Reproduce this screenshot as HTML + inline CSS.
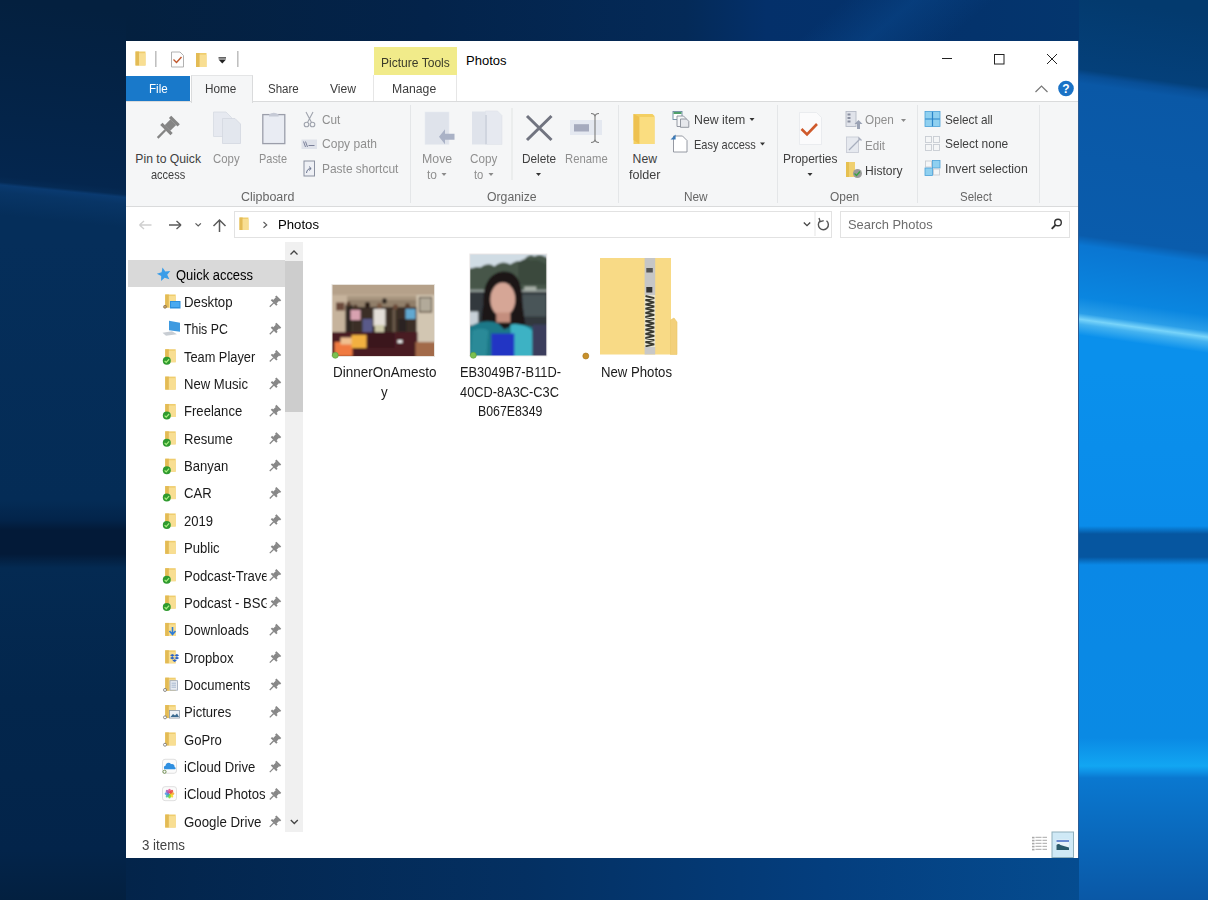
<!DOCTYPE html>
<html><head><meta charset="utf-8">
<style>
html,body{margin:0;padding:0;width:1208px;height:900px;overflow:hidden;}
body{position:relative;font-family:"Liberation Sans", sans-serif;background:#0a2f5c;}
.t{position:absolute;white-space:nowrap;}
.b{position:absolute;}
svg{position:absolute;overflow:visible;}
</style></head><body>

<div class="b" style="left:1079px;top:0;width:129px;height:370px;background:linear-gradient(187.97deg,#033a6e 15.0px,#04407a 86.3px,#084e96 92.2px,#0a58a6 100.1px,#0a5cac 250.7px,#0a76d2 260.6px,#0a86e0 312.1px,#2a9ee8 327.9px,#78d4fa 333.9px,#44b2f0 338.8px,#0a90ec 349.7px,#0a90ec 381.4px);"></div>
<div class="b" style="left:1079px;top:370px;width:129px;height:530px;background:linear-gradient(180deg,#0a90ec 0px,#0a8cea 156px,#0656a0 164px,#0656a0 187px,#0a88e6 195px,#0a8ae4 368px,#12a6f2 396px,#0e90e4 402px,#0a78d0 408px,#0a58a6 530px);"></div>
<div class="b" style="left:0;top:0;width:126px;height:240px;background:linear-gradient(185.71deg,#04203f 12.5px,#04264e 187.7px,#052a54 193.6px,#0a3a70 196.6px,#083566 203.6px,#052e5a 226.5px,#052e5a 271.2px);"></div>
<div class="b" style="left:0;top:240px;width:126px;height:660px;background:linear-gradient(180deg,#052e5a 0px,#042c56 260px,#03244a 280px,#031a38 290px,#031a38 314px,#042a52 328px,#03264c 460px,#03244a 610px,#032040 660px);"></div>
<div class="b" style="left:126px;top:0;width:953px;height:41px;background:linear-gradient(90deg,#04203f 0px,#03234a 300px,#042a58 560px,#04306a 640px,#04336c 850px,#04366e 953px);"></div>
<div class="b" style="left:126px;top:0;width:953px;height:41px;background:linear-gradient(140.00deg,rgba(10,74,144,0) 462.1px,rgba(10,74,144,0.45) 507.1px,rgba(10,74,144,0) 558.5px);"></div>
<div class="b" style="left:126px;top:858px;width:953px;height:42px;background:linear-gradient(90deg,#03244a 0px,#043062 400px,#043e7e 700px,#054c90 953px);"></div>
<div class="b" style="left:126px;top:41px;width:953px;height:817px;background:#fff;"></div>
<div class="t" style="left:466.00px;top:52.75px;font-size:13px;line-height:15px;color:#000;">Photos</div>
<div class="b" style="left:374px;top:47px;width:83px;height:28px;background:#f1eb8a;"></div>
<div class="t" style="left:380.80px;top:55.99px;font-size:12px;line-height:14px;color:#3b3b2a;transform:scaleX(1.0050);transform-origin:0 0;">Picture Tools</div>
<svg style="left:0;top:0" width="1208" height="900"><g stroke="#222" stroke-width="1" fill="none"><line x1="942" y1="58.5" x2="952" y2="58.5"/><rect x="994.5" y="54.5" width="9.5" height="9.5"/><line x1="1047" y1="54" x2="1057" y2="64"/><line x1="1057" y1="54" x2="1047" y2="64"/></g></svg>
<div class="b" style="left:126px;top:76px;width:64px;height:25px;background:#1979ca;"></div>
<div class="t" style="left:148.50px;top:82.19px;font-size:12px;line-height:14px;color:#fff;transform:scaleX(0.9679);transform-origin:0 0;">File</div>
<div class="t" style="left:267.90px;top:82.09px;font-size:12px;line-height:14px;color:#3c3c3c;transform:scaleX(0.9613);transform-origin:0 0;">Share</div>
<div class="t" style="left:330.00px;top:82.09px;font-size:12px;line-height:14px;color:#3c3c3c;transform:scaleX(1.0078);transform-origin:0 0;">View</div>
<div class="b" style="left:373px;top:75px;width:84px;height:26px;border-left:1px solid #e6e6e6;border-right:1px solid #e6e6e6;box-sizing:border-box;"></div>
<div class="t" style="left:392.40px;top:82.09px;font-size:12px;line-height:14px;color:#3c3c3c;transform:scaleX(1.0189);transform-origin:0 0;">Manage</div>
<div class="b" style="left:126px;top:101px;width:953px;height:106px;background:#f5f6f7;border-top:1px solid #dadbdc;border-bottom:1px solid #dadbdc;box-sizing:border-box;"></div>
<div class="b" style="left:190.5px;top:75px;width:62px;height:27.5px;background:#f5f6f7;border-left:1px solid #dadbdc;border-right:1px solid #dadbdc;border-top:1px solid #e4e5e6;box-sizing:border-box;"></div>
<div class="t" style="left:205.30px;top:82.19px;font-size:12px;line-height:14px;color:#3c3c3c;transform:scaleX(0.9800);transform-origin:0 0;">Home</div>
<div class="b" style="left:410px;top:105px;width:1px;height:98px;background:#e4e6e8;"></div>
<div class="b" style="left:618px;top:105px;width:1px;height:98px;background:#e4e6e8;"></div>
<div class="b" style="left:777px;top:105px;width:1px;height:98px;background:#e4e6e8;"></div>
<div class="b" style="left:917px;top:105px;width:1px;height:98px;background:#e4e6e8;"></div>
<div class="b" style="left:1039px;top:105px;width:1px;height:98px;background:#e4e6e8;"></div>
<div class="t" style="left:240.90px;top:189.59px;font-size:12px;line-height:14px;color:#666;transform:scaleX(1.0378);transform-origin:0 0;">Clipboard</div>
<div class="t" style="left:487.30px;top:189.59px;font-size:12px;line-height:14px;color:#666;transform:scaleX(1.0201);transform-origin:0 0;">Organize</div>
<div class="t" style="left:683.50px;top:189.59px;font-size:12px;line-height:14px;color:#666;transform:scaleX(0.9850);transform-origin:0 0;">New</div>
<div class="t" style="left:830.30px;top:189.59px;font-size:12px;line-height:14px;color:#666;transform:scaleX(0.9918);transform-origin:0 0;">Open</div>
<div class="t" style="left:960.40px;top:189.59px;font-size:12px;line-height:14px;color:#666;transform:scaleX(0.9562);transform-origin:0 0;">Select</div>
<div class="t" style="left:135.30px;top:152.22px;font-size:12.2px;line-height:14px;color:#404040;">Pin to Quick</div>
<div class="t" style="left:150.80px;top:168.12px;font-size:12.2px;line-height:14px;color:#404040;transform:scaleX(0.9014);transform-origin:0 0;">access</div>
<div class="t" style="left:213.00px;top:152.22px;font-size:12.2px;line-height:14px;color:#8f8f8f;transform:scaleX(0.9338);transform-origin:0 0;">Copy</div>
<div class="t" style="left:259.00px;top:152.22px;font-size:12.2px;line-height:14px;color:#8f8f8f;transform:scaleX(0.8983);transform-origin:0 0;">Paste</div>
<div class="t" style="left:322.20px;top:112.72px;font-size:12.2px;line-height:14px;color:#8f8f8f;transform:scaleX(0.9646);transform-origin:0 0;">Cut</div>
<div class="t" style="left:322.20px;top:137.22px;font-size:12.2px;line-height:14px;color:#8f8f8f;transform:scaleX(0.9886);transform-origin:0 0;">Copy path</div>
<div class="t" style="left:322.20px;top:162.22px;font-size:12.2px;line-height:14px;color:#8f8f8f;transform:scaleX(0.9800);transform-origin:0 0;">Paste shortcut</div>
<div class="t" style="left:421.80px;top:152.32px;font-size:12.2px;line-height:14px;color:#8f8f8f;transform:scaleX(1.0124);transform-origin:0 0;">Move</div>
<div class="t" style="left:426.90px;top:167.82px;font-size:12.2px;line-height:14px;color:#8f8f8f;transform:scaleX(0.9816);transform-origin:0 0;">to</div>
<div class="t" style="left:469.70px;top:152.32px;font-size:12.2px;line-height:14px;color:#8f8f8f;transform:scaleX(0.9583);transform-origin:0 0;">Copy</div>
<div class="t" style="left:473.90px;top:167.82px;font-size:12.2px;line-height:14px;color:#8f8f8f;transform:scaleX(0.9227);transform-origin:0 0;">to</div>
<div class="t" style="left:521.60px;top:152.32px;font-size:12.2px;line-height:14px;color:#404040;transform:scaleX(0.9700);transform-origin:0 0;">Delete</div>
<div class="t" style="left:565.00px;top:152.32px;font-size:12.2px;line-height:14px;color:#8f8f8f;transform:scaleX(0.9259);transform-origin:0 0;">Rename</div>
<div class="t" style="left:632.60px;top:152.12px;font-size:12.2px;line-height:14px;color:#404040;">New</div>
<div class="t" style="left:628.80px;top:168.32px;font-size:12.2px;line-height:14px;color:#404040;transform:scaleX(1.0328);transform-origin:0 0;">folder</div>
<div class="t" style="left:693.80px;top:112.72px;font-size:12.2px;line-height:14px;color:#404040;transform:scaleX(1.0103);transform-origin:0 0;">New item</div>
<div class="t" style="left:693.80px;top:138.12px;font-size:12.2px;line-height:14px;color:#404040;transform:scaleX(0.9036);transform-origin:0 0;">Easy access</div>
<div class="t" style="left:782.50px;top:151.52px;font-size:12.2px;line-height:14px;color:#404040;transform:scaleX(0.9797);transform-origin:0 0;">Properties</div>
<div class="t" style="left:865.40px;top:113.12px;font-size:12.2px;line-height:14px;color:#8f8f8f;transform:scaleX(0.9655);transform-origin:0 0;">Open</div>
<div class="t" style="left:865.40px;top:138.52px;font-size:12.2px;line-height:14px;color:#8f8f8f;transform:scaleX(0.9551);transform-origin:0 0;">Edit</div>
<div class="t" style="left:865.40px;top:163.52px;font-size:12.2px;line-height:14px;color:#404040;transform:scaleX(0.9910);transform-origin:0 0;">History</div>
<div class="t" style="left:945.20px;top:112.72px;font-size:12.2px;line-height:14px;color:#404040;transform:scaleX(0.9650);transform-origin:0 0;">Select all</div>
<div class="t" style="left:945.20px;top:137.32px;font-size:12.2px;line-height:14px;color:#404040;transform:scaleX(0.9827);transform-origin:0 0;">Select none</div>
<div class="t" style="left:945.20px;top:162.02px;font-size:12.2px;line-height:14px;color:#404040;transform:scaleX(1.0092);transform-origin:0 0;">Invert selection</div>
<div class="b" style="left:234px;top:210.5px;width:598px;height:27px;border:1px solid #e2e2e2;box-sizing:border-box;background:#fff;"></div>
<div class="t" style="left:277.50px;top:217.37px;font-size:13.5px;line-height:16px;color:#000;transform:scaleX(0.9750);transform-origin:0 0;">Photos</div>
<div class="b" style="left:839.5px;top:210.5px;width:230.5px;height:27px;border:1px solid #e2e2e2;box-sizing:border-box;background:#fff;"></div>
<div class="t" style="left:848.00px;top:217.47px;font-size:13.5px;line-height:16px;color:#6d6d6d;transform:scaleX(0.9564);transform-origin:0 0;">Search Photos</div>
<div class="b" style="left:128px;top:260px;width:157px;height:27px;background:#d9d9d9;"></div>
<div class="t" style="left:175.50px;top:266.50px;font-size:14px;line-height:16px;color:#000;transform:scaleX(0.9251);transform-origin:0 0;">Quick access</div>
<div class="b" style="left:0;top:0;width:1208px;height:900px;clip-path:inset(288px 941.5px 60px 180px);">
<div class="t" style="left:184.40px;top:293.80px;font-size:14px;line-height:16px;color:#1a1a1a;transform:scaleX(0.9459);transform-origin:0 0;">Desktop</div>
<div class="t" style="left:184.40px;top:321.17px;font-size:14px;line-height:16px;color:#1a1a1a;transform:scaleX(0.8800);transform-origin:0 0;">This PC</div>
<div class="t" style="left:184.40px;top:348.54px;font-size:14px;line-height:16px;color:#1a1a1a;transform:scaleX(0.9147);transform-origin:0 0;">Team Player</div>
<div class="t" style="left:184.40px;top:375.91px;font-size:14px;line-height:16px;color:#1a1a1a;transform:scaleX(0.9350);transform-origin:0 0;">New Music</div>
<div class="t" style="left:184.40px;top:403.28px;font-size:14px;line-height:16px;color:#1a1a1a;transform:scaleX(0.9350);transform-origin:0 0;">Freelance</div>
<div class="t" style="left:184.40px;top:430.65px;font-size:14px;line-height:16px;color:#1a1a1a;transform:scaleX(0.9350);transform-origin:0 0;">Resume</div>
<div class="t" style="left:184.40px;top:458.02px;font-size:14px;line-height:16px;color:#1a1a1a;transform:scaleX(0.9350);transform-origin:0 0;">Banyan</div>
<div class="t" style="left:184.40px;top:485.39px;font-size:14px;line-height:16px;color:#1a1a1a;transform:scaleX(0.9350);transform-origin:0 0;">CAR</div>
<div class="t" style="left:184.40px;top:512.76px;font-size:14px;line-height:16px;color:#1a1a1a;transform:scaleX(0.9350);transform-origin:0 0;">2019</div>
<div class="t" style="left:184.40px;top:540.13px;font-size:14px;line-height:16px;color:#1a1a1a;transform:scaleX(0.9350);transform-origin:0 0;">Public</div>
<div class="t" style="left:184.40px;top:567.50px;font-size:14px;line-height:16px;color:#1a1a1a;transform:scaleX(0.9350);transform-origin:0 0;">Podcast-Trave</div>
<div class="t" style="left:184.40px;top:594.87px;font-size:14px;line-height:16px;color:#1a1a1a;transform:scaleX(0.9350);transform-origin:0 0;">Podcast - BSG</div>
<div class="t" style="left:184.40px;top:622.24px;font-size:14px;line-height:16px;color:#1a1a1a;transform:scaleX(0.9350);transform-origin:0 0;">Downloads</div>
<div class="t" style="left:184.40px;top:649.61px;font-size:14px;line-height:16px;color:#1a1a1a;transform:scaleX(0.9350);transform-origin:0 0;">Dropbox</div>
<div class="t" style="left:184.40px;top:676.98px;font-size:14px;line-height:16px;color:#1a1a1a;transform:scaleX(0.9350);transform-origin:0 0;">Documents</div>
<div class="t" style="left:184.40px;top:704.35px;font-size:14px;line-height:16px;color:#1a1a1a;transform:scaleX(0.9350);transform-origin:0 0;">Pictures</div>
<div class="t" style="left:184.40px;top:731.72px;font-size:14px;line-height:16px;color:#1a1a1a;transform:scaleX(0.9350);transform-origin:0 0;">GoPro</div>
<div class="t" style="left:184.40px;top:759.09px;font-size:14px;line-height:16px;color:#1a1a1a;transform:scaleX(0.9350);transform-origin:0 0;">iCloud Drive</div>
<div class="t" style="left:184.40px;top:786.46px;font-size:14px;line-height:16px;color:#1a1a1a;transform:scaleX(0.9350);transform-origin:0 0;">iCloud Photos</div>
<div class="t" style="left:184.40px;top:813.83px;font-size:14px;line-height:16px;color:#1a1a1a;transform:scaleX(0.9475);transform-origin:0 0;">Google Drive</div>
</div>
<div class="b" style="left:285px;top:242px;width:18px;height:590px;background:#f0f0f0;"></div>
<div class="b" style="left:285px;top:261px;width:18px;height:151px;background:#cdcdcd;"></div>
<div class="t" style="left:333.00px;top:363.80px;font-size:14px;line-height:16px;color:#1a1a1a;transform:scaleX(0.9629);transform-origin:0 0;">DinnerOnAmesto</div>
<div class="t" style="left:380.50px;top:383.80px;font-size:14px;line-height:16px;color:#1a1a1a;transform:scaleX(0.9500);transform-origin:0 0;">y</div>
<div class="t" style="left:460.00px;top:363.80px;font-size:14px;line-height:16px;color:#1a1a1a;transform:scaleX(0.9161);transform-origin:0 0;">EB3049B7-B11D-</div>
<div class="t" style="left:460.00px;top:383.50px;font-size:14px;line-height:16px;color:#1a1a1a;transform:scaleX(0.9154);transform-origin:0 0;">40CD-8A3C-C3C</div>
<div class="t" style="left:478.00px;top:403.20px;font-size:14px;line-height:16px;color:#1a1a1a;transform:scaleX(0.8800);transform-origin:0 0;">B067E8349</div>
<div class="t" style="left:600.80px;top:363.70px;font-size:14px;line-height:16px;color:#1a1a1a;transform:scaleX(0.9409);transform-origin:0 0;">New Photos</div>
<div class="t" style="left:142.00px;top:836.90px;font-size:14px;line-height:16px;color:#444;transform:scaleX(0.9524);transform-origin:0 0;">3 items</div>
<svg style="left:0;top:0" width="1208" height="900"><polygon points="164.00,267.30 165.90,271.88 170.85,272.28 167.08,275.50 168.23,280.32 164.00,277.74 159.77,280.32 160.92,275.50 157.15,272.28 162.10,271.88" fill="#3a9de8" transform="rotate(-12 164 274.5)"/><g transform="translate(275.0,301.6) rotate(45) scale(1.0)" fill="#878787"><rect x="-3.4" y="-5.4" width="6.8" height="1.9"/><rect x="-2.4" y="-3.8" width="4.8" height="4.4"/><rect x="-3.9" y="0.2" width="7.8" height="1.9"/><rect x="-0.65" y="1.8" width="1.3" height="5.6"/></g><rect x="165.2" y="294.5" width="10.5" height="13" fill="#efcd6e"/><rect x="165.2" y="294.5" width="3.67" height="13" fill="#e3bb55"/><rect x="168.88" y="296.06" width="6.83" height="11.44" fill="#f8de92"/><rect x="170" y="301.0" width="10.5" height="7.5" fill="#2d8fdc"/><rect x="171" y="302.0" width="8.5" height="5" fill="#4aaaf0"/><circle cx="165" cy="306.8" r="1.5" fill="#c8a060" stroke="#706050" stroke-width="0.6"/><g transform="translate(275.0,328.97) rotate(45) scale(1.0)" fill="#878787"><rect x="-3.4" y="-5.4" width="6.8" height="1.9"/><rect x="-2.4" y="-3.8" width="4.8" height="4.4"/><rect x="-3.9" y="0.2" width="7.8" height="1.9"/><rect x="-0.65" y="1.8" width="1.3" height="5.6"/></g><path d="M169,320.87 L180,322.87 L180,331.87 L169,330.37 Z" fill="#3e9ae0"/><path d="M162.5,332.87 L172,331.37 L177,334.37 L166,335.87 Z" fill="#c8cdd3"/><g transform="translate(275.0,356.34000000000003) rotate(45) scale(1.0)" fill="#878787"><rect x="-3.4" y="-5.4" width="6.8" height="1.9"/><rect x="-2.4" y="-3.8" width="4.8" height="4.4"/><rect x="-3.9" y="0.2" width="7.8" height="1.9"/><rect x="-0.65" y="1.8" width="1.3" height="5.6"/></g><rect x="165.2" y="349.24" width="10.5" height="13" fill="#efcd6e"/><rect x="165.2" y="349.24" width="3.67" height="13" fill="#e3bb55"/><rect x="168.88" y="350.80" width="6.83" height="11.44" fill="#f8de92"/><circle cx="166.8" cy="360.74" r="4" fill="#2f9a2f"/><path d="M164.60000000000002,360.84000000000003 L166.20000000000002,362.44 L169.10000000000002,359.24" stroke="#a8f080" stroke-width="1.2" fill="none"/><g transform="translate(275.0,383.71000000000004) rotate(45) scale(1.0)" fill="#878787"><rect x="-3.4" y="-5.4" width="6.8" height="1.9"/><rect x="-2.4" y="-3.8" width="4.8" height="4.4"/><rect x="-3.9" y="0.2" width="7.8" height="1.9"/><rect x="-0.65" y="1.8" width="1.3" height="5.6"/></g><rect x="165.2" y="376.61" width="10.5" height="13" fill="#efcd6e"/><rect x="165.2" y="376.61" width="3.67" height="13" fill="#e3bb55"/><rect x="168.88" y="378.17" width="6.83" height="11.44" fill="#f8de92"/><g transform="translate(275.0,411.08000000000004) rotate(45) scale(1.0)" fill="#878787"><rect x="-3.4" y="-5.4" width="6.8" height="1.9"/><rect x="-2.4" y="-3.8" width="4.8" height="4.4"/><rect x="-3.9" y="0.2" width="7.8" height="1.9"/><rect x="-0.65" y="1.8" width="1.3" height="5.6"/></g><rect x="165.2" y="403.98" width="10.5" height="13" fill="#efcd6e"/><rect x="165.2" y="403.98" width="3.67" height="13" fill="#e3bb55"/><rect x="168.88" y="405.54" width="6.83" height="11.44" fill="#f8de92"/><circle cx="166.8" cy="415.48" r="4" fill="#2f9a2f"/><path d="M164.60000000000002,415.58000000000004 L166.20000000000002,417.18 L169.10000000000002,413.98" stroke="#a8f080" stroke-width="1.2" fill="none"/><g transform="translate(275.0,438.45000000000005) rotate(45) scale(1.0)" fill="#878787"><rect x="-3.4" y="-5.4" width="6.8" height="1.9"/><rect x="-2.4" y="-3.8" width="4.8" height="4.4"/><rect x="-3.9" y="0.2" width="7.8" height="1.9"/><rect x="-0.65" y="1.8" width="1.3" height="5.6"/></g><rect x="165.2" y="431.35" width="10.5" height="13" fill="#efcd6e"/><rect x="165.2" y="431.35" width="3.67" height="13" fill="#e3bb55"/><rect x="168.88" y="432.91" width="6.83" height="11.44" fill="#f8de92"/><circle cx="166.8" cy="442.85" r="4" fill="#2f9a2f"/><path d="M164.60000000000002,442.95000000000005 L166.20000000000002,444.55 L169.10000000000002,441.35" stroke="#a8f080" stroke-width="1.2" fill="none"/><g transform="translate(275.0,465.82000000000005) rotate(45) scale(1.0)" fill="#878787"><rect x="-3.4" y="-5.4" width="6.8" height="1.9"/><rect x="-2.4" y="-3.8" width="4.8" height="4.4"/><rect x="-3.9" y="0.2" width="7.8" height="1.9"/><rect x="-0.65" y="1.8" width="1.3" height="5.6"/></g><rect x="165.2" y="458.72" width="10.5" height="13" fill="#efcd6e"/><rect x="165.2" y="458.72" width="3.67" height="13" fill="#e3bb55"/><rect x="168.88" y="460.28" width="6.83" height="11.44" fill="#f8de92"/><circle cx="166.8" cy="470.22" r="4" fill="#2f9a2f"/><path d="M164.60000000000002,470.32000000000005 L166.20000000000002,471.92 L169.10000000000002,468.72" stroke="#a8f080" stroke-width="1.2" fill="none"/><g transform="translate(275.0,493.19000000000005) rotate(45) scale(1.0)" fill="#878787"><rect x="-3.4" y="-5.4" width="6.8" height="1.9"/><rect x="-2.4" y="-3.8" width="4.8" height="4.4"/><rect x="-3.9" y="0.2" width="7.8" height="1.9"/><rect x="-0.65" y="1.8" width="1.3" height="5.6"/></g><rect x="165.2" y="486.09000000000003" width="10.5" height="13" fill="#efcd6e"/><rect x="165.2" y="486.09000000000003" width="3.67" height="13" fill="#e3bb55"/><rect x="168.88" y="487.65" width="6.83" height="11.44" fill="#f8de92"/><circle cx="166.8" cy="497.59000000000003" r="4" fill="#2f9a2f"/><path d="M164.60000000000002,497.69000000000005 L166.20000000000002,499.29 L169.10000000000002,496.09000000000003" stroke="#a8f080" stroke-width="1.2" fill="none"/><g transform="translate(275.0,520.56) rotate(45) scale(1.0)" fill="#878787"><rect x="-3.4" y="-5.4" width="6.8" height="1.9"/><rect x="-2.4" y="-3.8" width="4.8" height="4.4"/><rect x="-3.9" y="0.2" width="7.8" height="1.9"/><rect x="-0.65" y="1.8" width="1.3" height="5.6"/></g><rect x="165.2" y="513.46" width="10.5" height="13" fill="#efcd6e"/><rect x="165.2" y="513.46" width="3.67" height="13" fill="#e3bb55"/><rect x="168.88" y="515.02" width="6.83" height="11.44" fill="#f8de92"/><circle cx="166.8" cy="524.96" r="4" fill="#2f9a2f"/><path d="M164.60000000000002,525.0600000000001 L166.20000000000002,526.6600000000001 L169.10000000000002,523.46" stroke="#a8f080" stroke-width="1.2" fill="none"/><g transform="translate(275.0,547.93) rotate(45) scale(1.0)" fill="#878787"><rect x="-3.4" y="-5.4" width="6.8" height="1.9"/><rect x="-2.4" y="-3.8" width="4.8" height="4.4"/><rect x="-3.9" y="0.2" width="7.8" height="1.9"/><rect x="-0.65" y="1.8" width="1.3" height="5.6"/></g><rect x="165.2" y="540.83" width="10.5" height="13" fill="#efcd6e"/><rect x="165.2" y="540.83" width="3.67" height="13" fill="#e3bb55"/><rect x="168.88" y="542.39" width="6.83" height="11.44" fill="#f8de92"/><g transform="translate(275.0,575.3) rotate(45) scale(1.0)" fill="#878787"><rect x="-3.4" y="-5.4" width="6.8" height="1.9"/><rect x="-2.4" y="-3.8" width="4.8" height="4.4"/><rect x="-3.9" y="0.2" width="7.8" height="1.9"/><rect x="-0.65" y="1.8" width="1.3" height="5.6"/></g><rect x="165.2" y="568.2" width="10.5" height="13" fill="#efcd6e"/><rect x="165.2" y="568.2" width="3.67" height="13" fill="#e3bb55"/><rect x="168.88" y="569.76" width="6.83" height="11.44" fill="#f8de92"/><circle cx="166.8" cy="579.7" r="4" fill="#2f9a2f"/><path d="M164.60000000000002,579.8000000000001 L166.20000000000002,581.4000000000001 L169.10000000000002,578.2" stroke="#a8f080" stroke-width="1.2" fill="none"/><g transform="translate(275.0,602.6699999999998) rotate(45) scale(1.0)" fill="#878787"><rect x="-3.4" y="-5.4" width="6.8" height="1.9"/><rect x="-2.4" y="-3.8" width="4.8" height="4.4"/><rect x="-3.9" y="0.2" width="7.8" height="1.9"/><rect x="-0.65" y="1.8" width="1.3" height="5.6"/></g><rect x="165.2" y="595.5699999999999" width="10.5" height="13" fill="#efcd6e"/><rect x="165.2" y="595.5699999999999" width="3.67" height="13" fill="#e3bb55"/><rect x="168.88" y="597.13" width="6.83" height="11.44" fill="#f8de92"/><circle cx="166.8" cy="607.0699999999999" r="4" fill="#2f9a2f"/><path d="M164.60000000000002,607.17 L166.20000000000002,608.77 L169.10000000000002,605.5699999999999" stroke="#a8f080" stroke-width="1.2" fill="none"/><g transform="translate(275.0,630.04) rotate(45) scale(1.0)" fill="#878787"><rect x="-3.4" y="-5.4" width="6.8" height="1.9"/><rect x="-2.4" y="-3.8" width="4.8" height="4.4"/><rect x="-3.9" y="0.2" width="7.8" height="1.9"/><rect x="-0.65" y="1.8" width="1.3" height="5.6"/></g><rect x="165.2" y="622.94" width="10.5" height="13" fill="#efcd6e"/><rect x="165.2" y="622.94" width="3.67" height="13" fill="#e3bb55"/><rect x="168.88" y="624.50" width="6.83" height="11.44" fill="#f8de92"/><path d="M172.5,626.94 L172.5,633.44 M169.5,630.94 L172.5,634.44 L175.5,630.94" stroke="#2e7cd6" stroke-width="1.6" fill="none"/><g transform="translate(275.0,657.4099999999999) rotate(45) scale(1.0)" fill="#878787"><rect x="-3.4" y="-5.4" width="6.8" height="1.9"/><rect x="-2.4" y="-3.8" width="4.8" height="4.4"/><rect x="-3.9" y="0.2" width="7.8" height="1.9"/><rect x="-0.65" y="1.8" width="1.3" height="5.6"/></g><rect x="165.2" y="650.31" width="10.5" height="13" fill="#efcd6e"/><rect x="165.2" y="650.31" width="3.67" height="13" fill="#e3bb55"/><rect x="168.88" y="651.87" width="6.83" height="11.44" fill="#f8de92"/><path d="M170,655.31 l2.3,-1.4 2.3,1.4 -2.3,1.4 Z M174.6,655.31 l2.3,-1.4 2.3,1.4 -2.3,1.4 Z M170,658.1099999999999 l2.3,-1.4 2.3,1.4 -2.3,1.4 Z M174.6,658.1099999999999 l2.3,-1.4 2.3,1.4 -2.3,1.4 Z M172.3,660.51 l2.3,-1.3 2.3,1.3 -2.3,1.4 Z" fill="#2b63c8"/><g transform="translate(275.0,684.78) rotate(45) scale(1.0)" fill="#878787"><rect x="-3.4" y="-5.4" width="6.8" height="1.9"/><rect x="-2.4" y="-3.8" width="4.8" height="4.4"/><rect x="-3.9" y="0.2" width="7.8" height="1.9"/><rect x="-0.65" y="1.8" width="1.3" height="5.6"/></g><rect x="165.2" y="677.6800000000001" width="10.5" height="13" fill="#efcd6e"/><rect x="165.2" y="677.6800000000001" width="3.67" height="13" fill="#e3bb55"/><rect x="168.88" y="679.24" width="6.83" height="11.44" fill="#f8de92"/><rect x="170" y="680.6800000000001" width="7.5" height="9.5" fill="#e8ecf2" stroke="#9aa6b8" stroke-width="0.8"/><path d="M171.5,683.1800000000001 h4.5 M171.5,685.1800000000001 h4.5 M171.5,687.1800000000001 h4.5" stroke="#8aa0c0" stroke-width="0.7"/><circle cx="165" cy="689.98" r="1.5" fill="#fff" stroke="#606060" stroke-width="0.7"/><g transform="translate(275.0,712.1499999999999) rotate(45) scale(1.0)" fill="#878787"><rect x="-3.4" y="-5.4" width="6.8" height="1.9"/><rect x="-2.4" y="-3.8" width="4.8" height="4.4"/><rect x="-3.9" y="0.2" width="7.8" height="1.9"/><rect x="-0.65" y="1.8" width="1.3" height="5.6"/></g><rect x="165.2" y="705.05" width="10.5" height="13" fill="#efcd6e"/><rect x="165.2" y="705.05" width="3.67" height="13" fill="#e3bb55"/><rect x="168.88" y="706.61" width="6.83" height="11.44" fill="#f8de92"/><rect x="169.5" y="710.55" width="10" height="7.5" fill="#eef2f6" stroke="#8c9aa8" stroke-width="0.8"/><path d="M170.5,717.05 L173,714.05 L175,715.55 L177,713.55 L179,717.05 Z" fill="#3a6a90"/><circle cx="165" cy="717.3499999999999" r="1.5" fill="#fff" stroke="#606060" stroke-width="0.7"/><g transform="translate(275.0,739.52) rotate(45) scale(1.0)" fill="#878787"><rect x="-3.4" y="-5.4" width="6.8" height="1.9"/><rect x="-2.4" y="-3.8" width="4.8" height="4.4"/><rect x="-3.9" y="0.2" width="7.8" height="1.9"/><rect x="-0.65" y="1.8" width="1.3" height="5.6"/></g><rect x="165.2" y="732.4200000000001" width="10.5" height="13" fill="#efcd6e"/><rect x="165.2" y="732.4200000000001" width="3.67" height="13" fill="#e3bb55"/><rect x="168.88" y="733.98" width="6.83" height="11.44" fill="#f8de92"/><circle cx="165" cy="744.72" r="1.5" fill="#fff" stroke="#606060" stroke-width="0.7"/><g transform="translate(275.0,766.8899999999999) rotate(45) scale(1.0)" fill="#878787"><rect x="-3.4" y="-5.4" width="6.8" height="1.9"/><rect x="-2.4" y="-3.8" width="4.8" height="4.4"/><rect x="-3.9" y="0.2" width="7.8" height="1.9"/><rect x="-0.65" y="1.8" width="1.3" height="5.6"/></g><rect x="162.5" y="759.29" width="14" height="14" rx="2.5" fill="#fbfbfb" stroke="#d8d8d8" stroke-width="0.8"/><path d="M165,769.29 C163.5,769.29 163.5,765.79 165.5,765.79 C165.8,762.79 169.5,761.79 171,764.29 C173,763.29 175,765.29 174.5,767.0899999999999 C176,767.29 176,769.29 174.5,769.29 Z" fill="#2f8fe0"/><circle cx="164.5" cy="771.79" r="1.6" fill="none" stroke="#6a8a4a" stroke-width="0.9"/><g transform="translate(275.0,794.26) rotate(45) scale(1.0)" fill="#878787"><rect x="-3.4" y="-5.4" width="6.8" height="1.9"/><rect x="-2.4" y="-3.8" width="4.8" height="4.4"/><rect x="-3.9" y="0.2" width="7.8" height="1.9"/><rect x="-0.65" y="1.8" width="1.3" height="5.6"/></g><rect x="162.5" y="786.6600000000001" width="14" height="14" rx="2.5" fill="#fbfbfb" stroke="#d8d8d8" stroke-width="0.8"/><ellipse cx="172.10" cy="793.66" rx="2.3" ry="1.4" fill="#f5a623" opacity="0.85" transform="rotate(0 172.10 793.66)"/><ellipse cx="171.34" cy="795.50" rx="2.3" ry="1.4" fill="#f8d21c" opacity="0.85" transform="rotate(45 171.34 795.50)"/><ellipse cx="169.50" cy="796.26" rx="2.3" ry="1.4" fill="#7ed321" opacity="0.85" transform="rotate(90 169.50 796.26)"/><ellipse cx="167.66" cy="795.50" rx="2.3" ry="1.4" fill="#37b7a0" opacity="0.85" transform="rotate(135 167.66 795.50)"/><ellipse cx="166.90" cy="793.66" rx="2.3" ry="1.4" fill="#4a90e2" opacity="0.85" transform="rotate(180 166.90 793.66)"/><ellipse cx="167.66" cy="791.82" rx="2.3" ry="1.4" fill="#9b59b6" opacity="0.85" transform="rotate(225 167.66 791.82)"/><ellipse cx="169.50" cy="791.06" rx="2.3" ry="1.4" fill="#e84a8a" opacity="0.85" transform="rotate(270 169.50 791.06)"/><ellipse cx="171.34" cy="791.82" rx="2.3" ry="1.4" fill="#e8453c" opacity="0.85" transform="rotate(315 171.34 791.82)"/><g transform="translate(275.0,821.6299999999999) rotate(45) scale(1.0)" fill="#878787"><rect x="-3.4" y="-5.4" width="6.8" height="1.9"/><rect x="-2.4" y="-3.8" width="4.8" height="4.4"/><rect x="-3.9" y="0.2" width="7.8" height="1.9"/><rect x="-0.65" y="1.8" width="1.3" height="5.6"/></g><rect x="165.2" y="814.53" width="10.5" height="13" fill="#efcd6e"/><rect x="165.2" y="814.53" width="3.67" height="13" fill="#e3bb55"/><rect x="168.88" y="816.09" width="6.83" height="11.44" fill="#f8de92"/><path d="M290.5,254.5 L294,251 L297.5,254.5" stroke="#444" stroke-width="1.3" fill="none"/><path d="M290.8,820 L294.3,823.5 L297.8,820" stroke="#444" stroke-width="1.3" fill="none"/><path d="M139.5,225 h12 M139.5,225 l4.5,-4 M139.5,225 l4.5,4" stroke="#cfcfcf" stroke-width="1.4" fill="none"/><path d="M169,225 h12 M181,225 l-4.5,-4" stroke="#5a5a5a" stroke-width="1.4" fill="none"/><path d="M181,225 l-4.5,4" stroke="#5a5a5a" stroke-width="1.4" fill="none"/><path d="M195.5,223.3 l2.7,2.7 2.7,-2.7" stroke="#5a5a5a" stroke-width="1.2" fill="none"/><path d="M219.5,232 v-11.5 M213.5,226 l6,-6 6,6" stroke="#5a5a5a" stroke-width="1.5" fill="none"/><rect x="239.5" y="217.5" width="9" height="12.5" fill="#efcd6e"/><rect x="239.5" y="217.5" width="3.15" height="12.5" fill="#e3bb55"/><rect x="242.65" y="219.00" width="5.85" height="11.00" fill="#f8de92"/><path d="M263.5,222 l3.2,2.9 -3.2,2.9" stroke="#5a5a5a" stroke-width="1.2" fill="none"/><path d="M803.8,222.5 l3.2,3.2 3.2,-3.2" stroke="#444" stroke-width="1.3" fill="none"/><rect x="814.5" y="212" width="1" height="24" fill="#e5e5e5"/><path d="M826.5,220.8 A5,5 0 1 1 820,221" stroke="#555" stroke-width="1.4" fill="none"/><path d="M819,218 l1.2,3.6 3.5,-0.9" stroke="#555" stroke-width="1.3" fill="none"/><circle cx="1058" cy="222.5" r="3.3" stroke="#333" stroke-width="1.4" fill="none"/><path d="M1055.5,225 l-3.8,3.8" stroke="#333" stroke-width="1.8"/><rect x="135.5" y="51.5" width="10" height="14" fill="#efcd6e"/><rect x="135.5" y="51.5" width="3.50" height="14" fill="#e3bb55"/><rect x="139.00" y="53.18" width="6.50" height="12.32" fill="#f8de92"/><rect x="155.3" y="51" width="1.1" height="16" fill="#a5a5a5"/><path d="M171.5,52 h8.5 l3.5,3.5 v11.5 h-12 Z" fill="#fdfdfd" stroke="#a8a8a8" stroke-width="0.9"/><path d="M173.5,59.5 l3,3 5,-5.5" stroke="#c0552a" stroke-width="1.4" fill="none"/><rect x="196" y="53" width="10.5" height="14" fill="#efcd6e"/><rect x="196" y="53" width="3.67" height="14" fill="#e3bb55"/><rect x="199.68" y="54.68" width="6.83" height="12.32" fill="#f8de92"/><rect x="218.5" y="57.3" width="7.5" height="1.2" fill="#222"/><path d="M218.5,59.5 h7.5 l-3.75,4 Z" fill="#222"/><rect x="237.3" y="51" width="1.1" height="16" fill="#a5a5a5"/><path d="M1035.5,92 l6,-6 6,6" stroke="#777" stroke-width="1.2" fill="none"/><circle cx="1066" cy="88.5" r="7.8" fill="#1a72c6"/><g transform="translate(168,127.5) rotate(45) scale(1.9)" fill="#858585"><rect x="-3.2" y="-5.6" width="6.4" height="1.7"/><rect x="-2.1" y="-4" width="4.2" height="4.4"/><rect x="-3.8" y="0.3" width="7.6" height="1.7"/><rect x="-0.6" y="1.9" width="1.2" height="5.8"/></g><path d="M213.5,112 h12.5 l5.5,5.5 v19 h-18 Z" fill="#e6e9f0" stroke="#d6dae2" stroke-width="0.8"/><path d="M222.5,118.5 h12.5 l5.5,5.5 v19.5 h-18 Z" fill="#e3e7ee" stroke="#d3d7df" stroke-width="0.8"/><rect x="262.8" y="114.6" width="22" height="29" fill="#e9ecf3" stroke="#9b9eaa" stroke-width="1.3"/><path d="M269,114.6 q4.8,-3.5 9.6,0 v2 h-9.6 Z" fill="#c6cad6"/><g stroke="#a0a4ae" stroke-width="1.1" fill="none"><path d="M306,112 L311.5,122.5 M313,112 L307.5,122.5"/><circle cx="306.5" cy="124.5" r="2.3"/><circle cx="312.5" cy="124.5" r="2.3"/></g><rect x="301.5" y="139.5" width="15.5" height="9.5" fill="#dfe2ea"/><path d="M303.5,141.5 l2,5.5 M305.5,141.5 l2,5.5 M308.5,145.5 h6" stroke="#6f7590" stroke-width="0.9" fill="none"/><rect x="304" y="161" width="10.5" height="15" fill="#eef0f5" stroke="#8a90a0" stroke-width="1"/><path d="M306.5,173 q0.5,-4.5 4.5,-4.5 M309,166.5 l2.2,2 -2.2,2" stroke="#6c7690" stroke-width="1" fill="none"/><rect x="425" y="112" width="24" height="32.5" fill="#dfe3eb" stroke="#e8ebf1" stroke-width="0.6"/><path d="M439,136.8 l6,-7.5 v4.5 h9.5 v6 h-9.5 v4.5 Z" fill="#aab2c6"/><rect x="472" y="111.5" width="16" height="33" fill="#dfe3eb"/><path d="M485.5,111 h12 l4.5,4.5 v29 h-16.5 Z" fill="#e6e9f0" stroke="#dfe3ea" stroke-width="0.6"/><rect x="485" y="115" width="2" height="29" fill="#d0d5df"/><path d="M527,116 L551.5,140 M551.5,116 L527,140" stroke="#717480" stroke-width="3" fill="none"/><rect x="570" y="120" width="24" height="15" fill="#e4e8f0"/><rect x="594" y="120" width="8" height="15" fill="#e4e8f0"/><rect x="574" y="124.2" width="15" height="7.3" fill="#a5aabd"/><path d="M591,113.5 q4,0 4,3.5 v22 q0,3.5 4,3.5 M599,113.5 q-4,0 -4,3.5 M595,139 q0,3.5 -4,3.5" stroke="#7a7a7a" stroke-width="1.1" fill="none"/><path d="M633.5,114 h19 l2,2 v28 h-21 Z" fill="#f3cf62"/><path d="M633.5,114 l6,3 v27 l-6,-4 Z" fill="#eec150"/><path d="M639.5,117 h15 v27 h-15 Z" fill="#fadd80"/><rect x="673" y="111.5" width="9" height="8" fill="#fff" stroke="#6a8aa0" stroke-width="0.9"/><rect x="673.5" y="112" width="8" height="2" fill="#4fa06a"/><path d="M677,116 h6.5 l2.5,2.5 v8 h-9 Z" fill="#f5f6f8" stroke="#8a8f99" stroke-width="0.9"/><path d="M680.5,119 h6 l2.3,2.3 v6 h-8.3 Z" fill="#e6e8ec" stroke="#8a8f99" stroke-width="0.9"/><path d="M673.5,136 h9 l4.5,4.5 v11.5 h-13.5 Z" fill="#fff" stroke="#8a8f99" stroke-width="0.9"/><path d="M672,139 l3,-3 v3 Z" fill="#3a7ab8" stroke="#3a7ab8" stroke-width="1.2"/><path d="M799.5,112.5 h17 l5,5 v27 h-22 Z" fill="#fbfbfc" stroke="#e6e8ec" stroke-width="0.8"/><path d="M801.5,129 l5.5,5.5 l10,-10.5" stroke="#cf5a2c" stroke-width="2.6" fill="none"/><rect x="846" y="111.5" width="10" height="15" fill="#e0e3ea" stroke="#b6bac6" stroke-width="0.9"/><path d="M847.5,114.5 h3 M847.5,118 h3 M847.5,121.5 h3" stroke="#8a90a0" stroke-width="1.8"/><path d="M857,129 v-5 h-2.5 l4,-4 4,4 h-2.5 v5 Z" fill="#9aa2b4"/><rect x="846.5" y="137" width="12" height="15.5" fill="#e6e9ef" stroke="#c8ccd6" stroke-width="0.9"/><path d="M849,150 l11,-11 M858.5,137.5 l3,3" stroke="#a8aebd" stroke-width="1.3" fill="none"/><rect x="846" y="162" width="9" height="15" fill="#f0d070"/><rect x="846" y="162" width="3" height="15" fill="#e6c050"/><circle cx="857.5" cy="173.5" r="4.5" fill="#9a9a9a"/><path d="M854.5,173.5 l2,2 3.5,-4" stroke="#3aa040" stroke-width="1.4" fill="none"/><g><rect x="925" y="111.5" width="15" height="15" fill="#8fd0f0"/><path d="M932.5,111.5 v15 M925,119 h15" stroke="#2a84c8" stroke-width="1.2"/><rect x="925" y="111.5" width="15" height="15" fill="none" stroke="#4aa0d8" stroke-width="0.8"/></g><g fill="none" stroke="#c8ccd2" stroke-width="0.9"><rect x="925.5" y="136.5" width="6" height="6"/><rect x="933.5" y="136.5" width="6" height="6"/><rect x="925.5" y="144.5" width="6" height="6"/><rect x="933.5" y="144.5" width="6" height="6"/></g><g><rect x="925.5" y="161" width="6" height="6" fill="none" stroke="#c8ccd2" stroke-width="0.9"/><rect x="932.5" y="160.5" width="7.5" height="7.5" fill="#8fd0f0" stroke="#4aa0d8" stroke-width="0.8"/><rect x="925" y="168" width="7.5" height="7.5" fill="#8fd0f0" stroke="#4aa0d8" stroke-width="0.8"/><rect x="933.5" y="169" width="6" height="6" fill="none" stroke="#c8ccd2" stroke-width="0.9"/></g><path d="M441.5,173.0 h5 l-2.5,3 Z" fill="#8a8a8a"/><path d="M488.5,173.0 h5 l-2.5,3 Z" fill="#8a8a8a"/><path d="M536.0,173.0 h5 l-2.5,3 Z" fill="#333"/><path d="M749.5,118.0 h5 l-2.5,3 Z" fill="#333"/><path d="M760.0,142.5 h5 l-2.5,3 Z" fill="#333"/><path d="M807.5,173.0 h5 l-2.5,3 Z" fill="#333"/><path d="M901.0,119.0 h5 l-2.5,3 Z" fill="#8a8a8a"/><rect x="511.5" y="108" width="1" height="72" fill="#e2e3e4"/><defs><filter id="bl" x="-5%" y="-5%" width="110%" height="110%"><feGaussianBlur stdDeviation="0.9"/></filter><clipPath id="c1"><rect x="332.5" y="285" width="101.5" height="71"/></clipPath><clipPath id="c2"><rect x="470.3" y="254.5" width="76" height="101"/></clipPath></defs><rect x="331.5" y="284" width="103.5" height="73" fill="#e8e4de"/><g clip-path="url(#c1)"><g transform="translate(332.5,285)" filter="url(#bl)"><rect x="-2" y="-2" width="106" height="75" fill="#c6b39c"/><rect x="-2" y="-2" width="106" height="12" fill="#b5a18a"/><rect x="15" y="11" width="70" height="46" fill="#917f6a"/><rect x="15" y="11" width="70" height="4" fill="#a89680"/><rect x="84" y="10" width="20" height="50" fill="#d2c6b2"/><rect x="87" y="12.5" width="12" height="14.5" fill="#b2aa9a" stroke="#4a3a2a" stroke-width="1.1"/><rect x="3.5" y="17.5" width="8.5" height="8" fill="#6a4a3a"/><rect x="14" y="22" width="70" height="34" fill="#3a2e26"/><rect x="16" y="22" width="4" height="34" fill="#8a7866"/><rect x="60" y="24" width="3" height="24" fill="#6a5a4a"/><rect x="13" y="20" width="7" height="32" fill="#2e2622"/><ellipse cx="16" cy="19" rx="2.2" ry="2.6" fill="#5a4030"/><ellipse cx="23" cy="22" rx="2.2" ry="2.6" fill="#4a3428"/><ellipse cx="35" cy="20" rx="2.6" ry="3" fill="#2a1e18"/><ellipse cx="47" cy="21" rx="2.6" ry="3" fill="#7a5a44"/><ellipse cx="52" cy="16" rx="2.3" ry="2.8" fill="#2a201a"/><ellipse cx="63" cy="22" rx="2.4" ry="2.8" fill="#6a4a38"/><ellipse cx="75" cy="21" rx="2.4" ry="2.8" fill="#5a4030"/><rect x="41" y="24" width="12" height="17" fill="#e4ded8"/><rect x="42.5" y="40" width="9" height="8" fill="#ccc8a8"/><rect x="18" y="25" width="10" height="10" fill="#d8a2b0"/><rect x="73" y="24" width="10" height="10" fill="#62a8d0"/><rect x="30" y="34" width="10" height="14" fill="#5a5a8a"/><rect x="66" y="34" width="8" height="20" fill="#2a2420"/><rect x="-2" y="47" width="87" height="26" fill="#4a1c24"/><rect x="35" y="47" width="27" height="16" fill="#3a141c"/><rect x="83" y="57" width="21" height="16" fill="#a26a48"/><rect x="65" y="55" width="5" height="3" fill="#e8e8e8"/><rect x="2" y="57" width="18" height="14" fill="#f07a40"/><rect x="8" y="52.5" width="12" height="7" fill="#f0c090"/><rect x="19" y="50" width="15" height="13" fill="#f2b040"/></g></g><rect x="469.3" y="253.5" width="78" height="103" fill="#ece8e8"/><g clip-path="url(#c2)"><g transform="translate(470.3,254.5)" filter="url(#bl)"><rect x="-2" y="-2" width="80" height="105" fill="#3e4a44"/><rect x="-2" y="-2" width="80" height="16" fill="#d0dce4"/><path d="M-2,16 q6,-5 12,-3 q8,-6 14,-1 q8,-7 16,-2 q8,-6 12,-2 q6,-10 12,-6 q6,-4 14,2 v32 h-80 Z" fill="#46564a"/><path d="M48,8 q6,-6 12,-2 q8,-2 16,4 v20 h-28 Z" fill="#3a4a3c"/><rect x="-2" y="35" width="80" height="2.5" fill="#8a9490"/><rect x="-2" y="37.5" width="80" height="35" fill="#30383c"/><rect x="52" y="40" width="24" height="22" fill="#4a5458"/><rect x="54" y="32" width="12" height="4" fill="#a8b0a8"/><rect x="-2" y="57" width="10" height="14" fill="#c8d0d8"/><path d="M13,50 q-1,-30 19,-33 q20,-2 20,30 q2,18 4,28 h-44 q-2,-10 1,-25 Z" fill="#1c1618"/><ellipse cx="32.5" cy="45" rx="12.5" ry="17" fill="#d6a696"/><rect x="26" y="58" width="14" height="10" fill="#c48e7e"/><path d="M-2,73 q16,-10 30,-4 l6,6 q14,-8 30,-2 v32 h-66 Z" fill="#1a7888"/><path d="M40,70 q12,-2 22,6 l2,28 h-22 Z" fill="#3cb2c4"/><path d="M2,76 q10,-4 16,0 l-2,28 h-16 Z" fill="#2a8a98"/><rect x="21" y="79" width="23" height="24" fill="#2434c4"/><rect x="62" y="70" width="16" height="33" fill="#3a3c5c"/></g></g><circle cx="335.3" cy="355.3" r="3" fill="#7cc050" stroke="#5a9a3a" stroke-width="0.6"/><circle cx="473.3" cy="355.3" r="3" fill="#7cc050" stroke="#5a9a3a" stroke-width="0.6"/><circle cx="585.8" cy="356" r="3" fill="#c8902a" stroke="#a0701a" stroke-width="0.6"/><rect x="600" y="258" width="71" height="96.5" fill="#f8da86"/><path d="M670.5,320 l3.5,-2 l3,4 v32.5 h-6.5 Z" fill="#f3d07a" stroke="#ebc868" stroke-width="0.6"/><rect x="644.6" y="258" width="10.6" height="37" fill="#c6c6c6"/><rect x="646.3" y="268" width="6.5" height="4.5" fill="#555"/><rect x="646.3" y="287" width="6" height="5.5" fill="#333"/><rect x="644.6" y="295" width="10.6" height="52" fill="#e6e4d4"/><path d="M645.5,296 L654.2,298.1 L645.5,300.2 L654.2,302.3 L645.5,304.4 L654.2,306.5 L645.5,308.6 L654.2,310.7 L645.5,312.8 L654.2,314.9 L645.5,317.0 L654.2,319.1 L645.5,321.2 L654.2,323.3 L645.5,325.4 L654.2,327.5 L645.5,329.6 L654.2,331.7 L645.5,333.8 L654.2,335.9 L645.5,338.0 L654.2,340.1 L645.5,342.2 L654.2,344.3 L645.5,346.4" stroke="#3a3a30" stroke-width="1.9" fill="none"/><rect x="644.6" y="347" width="10.6" height="7.5" fill="#c8c8c8"/><g fill="#a8a8a8"><rect x="1032" y="836.8" width="2.5" height="1.6"/><rect x="1035.5" y="836.8" width="6" height="1"/><rect x="1042.5" y="836.8" width="4.5" height="1"/><rect x="1032" y="839.8" width="2.5" height="1.6"/><rect x="1035.5" y="839.8" width="6" height="1"/><rect x="1042.5" y="839.8" width="4.5" height="1"/><rect x="1032" y="842.8" width="2.5" height="1.6"/><rect x="1035.5" y="842.8" width="6" height="1"/><rect x="1042.5" y="842.8" width="4.5" height="1"/><rect x="1032" y="845.8" width="2.5" height="1.6"/><rect x="1035.5" y="845.8" width="6" height="1"/><rect x="1042.5" y="845.8" width="4.5" height="1"/><rect x="1032" y="848.8" width="2.5" height="1.6"/><rect x="1035.5" y="848.8" width="6" height="1"/><rect x="1042.5" y="848.8" width="4.5" height="1"/></g><rect x="1052" y="832" width="21.5" height="25.5" fill="#cfe9f6" stroke="#8fb0bc" stroke-width="1"/><rect x="1056.5" y="839.5" width="12.5" height="10.5" fill="#e8f2f8"/><path d="M1056.5,842 h12.5 v-2 h-12.5 Z" fill="#6a8ad0"/><path d="M1056.5,850 v-5 q2,-2 4,0 q4,1 8.5,2.5 v2.5 Z" fill="#2a5a6a"/></svg>
<div class="t" style="left:916.0px;top:82.3px;width:300px;text-align:center;font-size:12px;line-height:14px;color:#fff;font-weight:bold;">?</div>
<div class="b" style="left:1078px;top:41px;width:1px;height:817px;background:#2c5c94;"></div>
</body></html>
